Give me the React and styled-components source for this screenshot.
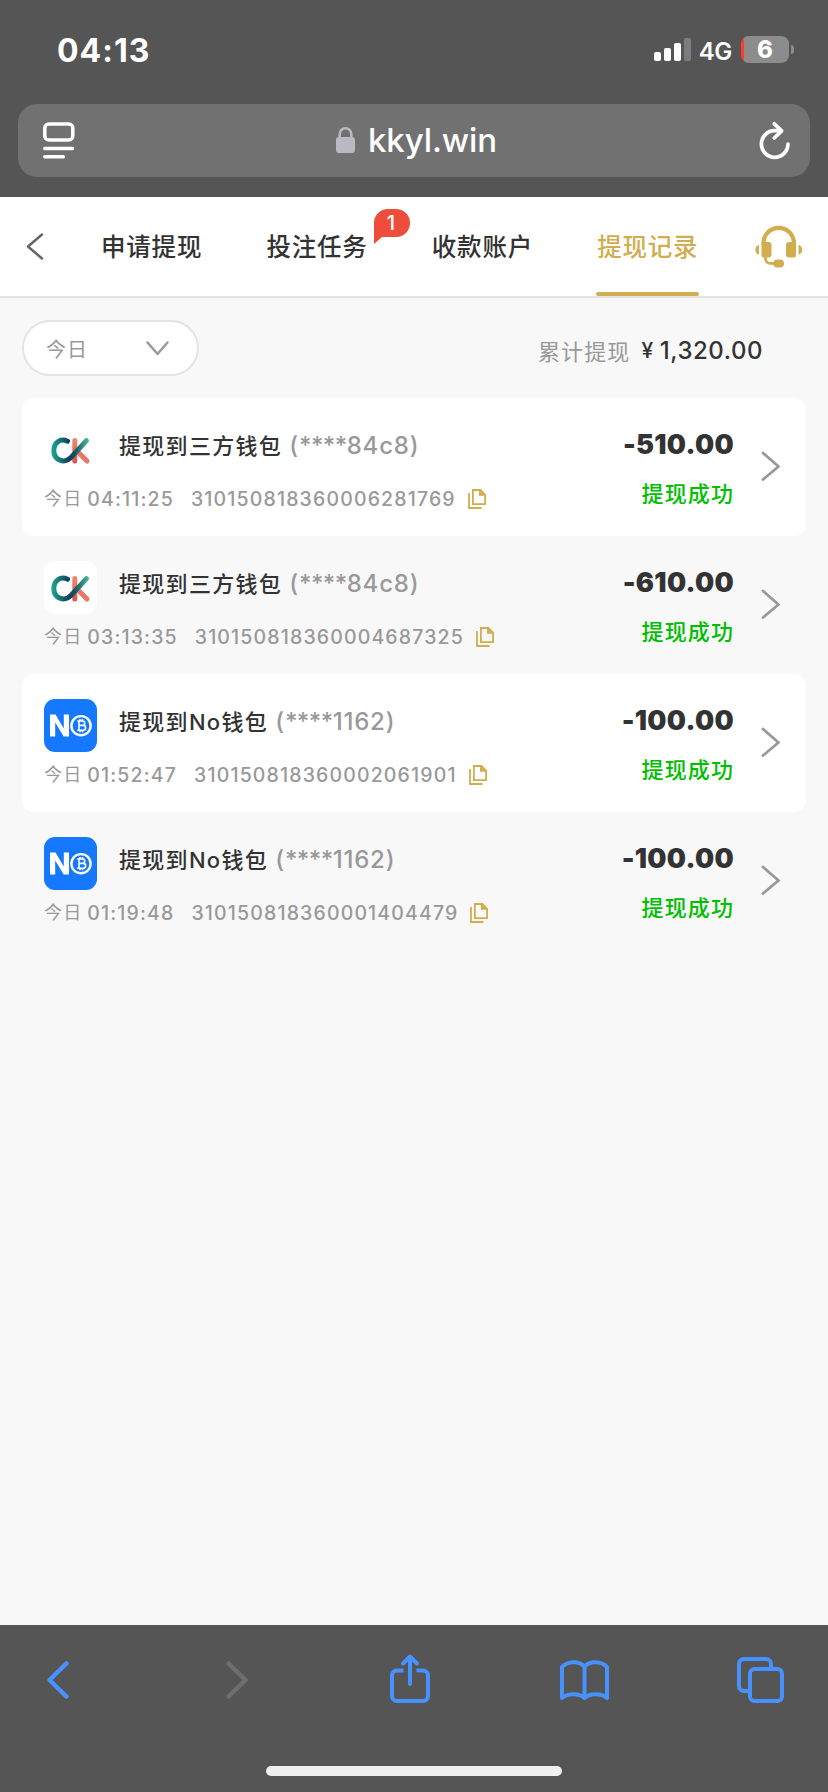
import React from "react";
import styled, { createGlobalStyle } from "styled-components";

const GlobalStyle = createGlobalStyle`
	* {
		box-sizing: border-box;
	}

	body {
		margin: 0;
		background: #f8f8f8;
		font-family: Inter, "Noto Sans CJK SC", sans-serif;
		color: #333;
	}
`;

const Screen = styled.div`
	display: flex;
	flex-direction: column;
	width: 828px;
	height: 1792px;
	background: #f8f8f8;
	white-space: nowrap;
`;

const Icon = styled.svg`
	display: block;
	flex: none;
	fill: none;
	overflow: visible;
`;

/* phone status bar + address bar */

const BrowserHeader = styled.header`
	flex: none;
	height: 197px;
	background: #555;
	color: #fff;
`;

const StatusBar = styled.div`
	display: flex;
	align-items: center;
	justify-content: space-between;
	height: 104px;
	padding: 0 34px 5px 57px;
`;

const Clock = styled.time`
	padding-top: 1px;
	font-size: 32px;
	font-weight: 700;
	letter-spacing: 1px;
`;

const StatusIcons = styled.div`
	display: flex;
	align-items: center;
`;

const Network = styled.span`
	margin: 4px 9px 0 8px;
	font-size: 24px;
	line-height: 28px;
	font-weight: 600;
	letter-spacing: -0.3px;
`;

const Battery = styled.div`
	width: 48px;
	height: 27px;
	border-radius: 8px;
	background: linear-gradient(90deg, #ff3b30 3px, #8c8c8c 3px);
	font-size: 24px;
	line-height: 28px;
	font-weight: 800;
	text-align: center;
`;

const BatteryTip = styled.i`
	width: 3px;
	height: 9px;
	margin-left: 2px;
	border-radius: 0 4px 4px 0;
	background: #8c8c8c;
`;

const AddressBar = styled.div`
	display: flex;
	align-items: center;
	justify-content: space-between;
	height: 73px;
	margin: 0 18px;
	padding: 0 20px 0 25px;
	border-radius: 19px;
	background: #717171;
`;

const Address = styled.div`
	display: flex;
	align-items: center;
	gap: 13px;
	margin-top: -2px;
	font-size: 33px;
	line-height: 40px;
	font-weight: 500;
	letter-spacing: -0.1px;
`;

/* page tabs */

const TabBar = styled.nav`
	display: flex;
	align-items: center;
	flex: none;
	height: 101px;
	padding-left: 26px;
	border-bottom: 2px solid #e2e2e2;
	background: #fff;
`;

const Tabs = styled.div`
	display: flex;
	gap: 63px;
	height: 99px;
	margin: 0 56px 0 56px;
`;

const Tab = styled.button`
	position: relative;
	width: 102.4px;
	padding: 2px 0 0 1px;
	border: 0;
	border-bottom: 4px solid transparent;
	background: none;
	color: ${(p) => (p.$active ? "#d1ad4f" : "#333")};
	font: 500 24.5px/93px "Noto Sans CJK SC", sans-serif;
	letter-spacing: 0.8px;
	text-align: left;

	&::after {
		content: "";
		position: absolute;
		left: 0;
		right: 0;
		bottom: -4px;
		height: 4px;
		border-radius: 2px;
		background: ${(p) => (p.$active ? "#d1ad4f" : "transparent")};
	}
`;

const Badge = styled.span`
	position: absolute;
	top: 12px;
	left: 108.4px;
	width: 36px;
	height: 35px;
	font: 500 20px/28px Inter, sans-serif;
	letter-spacing: 0;
	text-align: center;
	color: #fff;

	svg {
		position: absolute;
		inset: 0;
	}

	b {
		position: relative;
		left: -1px;
		font-weight: 500;
	}
`;

/* filter + total */

const Toolbar = styled.div`
	display: flex;
	justify-content: space-between;
	flex: none;
	height: 100px;
	padding: 22px 65px 0 22px;
`;

const DateFilter = styled.button`
	display: flex;
	align-items: center;
	justify-content: space-between;
	width: 177px;
	height: 56px;
	padding: 0 29px 0 22px;
	border: 2px solid #e3e3e3;
	border-radius: 28px;
	background: #fff;
	color: #999;
	font: 400 20px "Noto Sans CJK SC", sans-serif;
	letter-spacing: 1px;

	svg {
		margin-right: -1px;
	}
`;

const Total = styled.div`
	display: flex;
	align-items: center;
	height: 61px;
	font-size: 24px;
	font-weight: 500;
	letter-spacing: 0.55px;
`;

const TotalLabel = styled.span`
	margin: -2px 11px 0 0;
	color: #999;
	font-size: 22px;
	font-weight: 400;
	letter-spacing: 1.1px;
`;

const Currency = styled.span`
	margin-right: 6px;
	font-size: 21px;
`;

/* records */

const Records = styled.main`
	flex: 1;
	padding: 0 22px;
`;

const Record = styled.article`
	display: flex;
	height: 138px;
	padding: 25px 26px 0 22px;
	border-radius: 12px;
	background: ${(p) => (p.$filled ? "#fff" : "transparent")};
`;

const Details = styled.div`
	flex: 1;
`;

const Heading = styled.div`
	display: flex;
	gap: 22px;
	height: 53px;
`;

const Logo = styled.div`
	width: 53px;
	height: 53px;
	border-radius: 11px;
	background: ${(p) => p.$color};
	overflow: hidden;
`;

const Title = styled.h2`
	margin: 0;
	font-size: 22px;
	line-height: 46px;
	font-weight: 500;
	letter-spacing: 1.3px;
`;

const Mask = styled.span`
	color: #999;
	font-size: 24px;
	letter-spacing: 0.8px;
`;

const Stars = styled.span`
	letter-spacing: -0.55px;
`;

const Meta = styled.div`
	display: flex;
	align-items: center;
	height: 24px;
	margin-top: 11px;
	color: #999;
	font-size: 19.5px;
	line-height: 24px;
	font-weight: 500;
	letter-spacing: 1.15px;
`;

const Day = styled.span`
	margin-right: 5px;
	font-size: 18px;
	font-weight: 400;
`;

const Serial = styled.span`
	margin: 0 12px 0 17px;
`;

const Result = styled.div`
	display: flex;
	flex-direction: column;
	align-items: flex-end;
	margin-right: 27px;
	padding-top: 1px;
`;

const Amount = styled.strong`
	font-size: 27px;
	line-height: 42px;
	font-weight: 900;
	letter-spacing: 0.3px;
`;

const State = styled.span`
	margin-top: 13px;
	color: #00bf00;
	font-size: 22px;
	line-height: 30px;
	font-weight: 500;
	letter-spacing: 1.1px;
`;

const Arrow = styled(Icon)`
	margin-top: 28px;
`;

/* safari toolbar */

const BrowserFooter = styled.footer`
	flex: none;
	height: 167px;
	padding-top: 25px;
	background: #555;
`;

const FooterActions = styled.div`
	display: flex;
	align-items: center;
	justify-content: space-between;
	height: 60px;
	padding: 0 44px 0 34px;
`;

const FooterButton = styled.button`
	display: flex;
	justify-content: center;
	width: 48px;
	padding: 0 0 0 ${(p) => p.$shift || 0}px;
	border: 0;
	background: none;
`;

const HomeIndicator = styled.div`
	width: 296px;
	height: 10px;
	margin: 56px auto 0;
	border-radius: 5px;
	background: #efefef;
`;

const SignalIcon = () => (
	<Icon width="37" height="24">
		<g fill="#fff">
			<rect x="0" y="14" width="7" height="9" rx="2" />
			<rect x="10" y="10" width="7" height="13" rx="2" />
			<rect x="20" y="5" width="7" height="18" rx="2" />
			<rect x="30" y="0" width="7" height="23" rx="2" fill="#7d7d7d" />
		</g>
	</Icon>
);

const ReaderIcon = () => (
	<Icon width="32" height="37" stroke="#fff" strokeWidth="3.5" strokeLinecap="round">
		<rect x="1.8" y="2" width="28" height="16" rx="4" />
		<path d="M1.8 26.5h27.6M1.8 34.8h18.6" />
	</Icon>
);

const LockIcon = () => (
	<Icon width="19" height="27">
		<path d="M3.7 13V8a5.8 5.8 0 0 1 11.6 0v5" stroke="#b9b9c1" strokeWidth="2.6" />
		<rect y="11" width="19" height="16" rx="3" fill="#b9b9c1" />
	</Icon>
);

const ReloadIcon = () => (
	<Icon width="32" height="38" stroke="#fff" strokeWidth="3.7" strokeLinecap="round" strokeLinejoin="round">
		<path d="M30 22A13.3 13.3 0 1 1 16.7 8.7h6" />
		<path d="M16.3 1.8l7.400 7-7.400 7.200" />
	</Icon>
);

const HeadsetIcon = () => (
	<Icon width="48" height="42" viewBox="0 0 48 42">
		<path d="M8.500 19V17a15.200 15.200 0 0 1 30.400 0v2" stroke="#d1ad4f" strokeWidth="4.200" />
		<path d="M10.500 30v2.500a4.800 4.800 0 0 0 4.800 4.800H21" stroke="#d1ad4f" strokeWidth="2.800" />
		<g fill="#d1ad4f">
			<path d="M6.500 16h7a3 3 0 0 1 3 3v9.500a3 3 0 0 1-3 3H8.500a2 2 0 0 1-2-2z" />
			<path d="M41 16h-7a3 3 0 0 0-3 3v9.500a3 3 0 0 0 3 3h5a2 2 0 0 0 2-2z" />
			<path d="M4 19v9.500C1.500 28.100 0.300 26 0.300 23.700S1.500 19.400 4 19zM43.500 19v9.500c2.500-.4 3.700-2.500 3.700-4.800s-1.200-4.300-3.700-4.700z" />
			<rect x="18.300" y="33.500" width="10.700" height="8" rx="4" />
		</g>
	</Icon>
);

const CopyIcon = () => (
	<Icon width="18" height="20" stroke="#d1ad4f" strokeWidth="1.800">
		<path d="M4.900 1h7.600l4.600 4.800v9.400H4.900z" />
		<path d="M1 4v15h12.500" />
		<path d="M11 .8v5.900h6.500z" fill="#d1ad4f" stroke="none" />
	</Icon>
);

const CkLogo = () => (
	<Icon width="53" height="53" strokeLinecap="round" strokeWidth="5">
		<defs>
			<linearGradient id="ckBlue" gradientUnits="userSpaceOnUse" x1="8" y1="0" x2="45" y2="0">
				<stop offset="0" stopColor="#1ba793" />
				<stop offset="0.450" stopColor="#123f5b" />
				<stop offset="0.600" stopColor="#154e61" />
				<stop offset="1" stopColor="#46bd9e" />
			</linearGradient>
			<linearGradient id="ckRed" gradientUnits="userSpaceOnUse" x1="0" y1="15" x2="0" y2="41">
				<stop offset="0" stopColor="#ee8b72" />
				<stop offset="1" stopColor="#d9534b" />
			</linearGradient>
		</defs>
		<path d="M30.800 17.500v20.500" stroke="url(#ckRed)" />
		<path d="M35 30l8 8" stroke="#e77864" />
		<path d="M23.500 18.200C16 14.800 9.800 20 9.800 27.500c0 10 10.500 13.500 17.200 7L42.500 17.600" stroke="url(#ckBlue)" />
	</Icon>
);

const NoLogo = () => (
	<Icon width="53" height="53" stroke="#fff">
		<path d="M6 37.500V15.500h5.500l8.300 14V15.500H25v22h-5.300l-8.500-14v14z" fill="#fff" stroke="none" />
		<circle cx="37" cy="26.700" r="9.600" strokeWidth="2.400" />
		<path d="M35 22h3.500a2.200 2.200 0 0 1 0 4.400H35h4.200a2.400 2.400 0 0 1 0 4.800H35zM33.200 22h2M33.200 31.200h2M36 20v2M38.500 20v2M36 31.200v2M38.500 31.200v2" strokeWidth="1.600" />
	</Icon>
);

const logos = {
	ck: { color: "#fff", Mark: CkLogo },
	no: { color: "#1677ff", Mark: NoLogo },
};

const tabs = [
	{ name: "申请提现" },
	{ name: "投注任务", badge: 1 },
	{ name: "收款账户" },
	{ name: "提现记录", active: true },
];

const records = [
	{ logo: "ck", wallet: "三方钱包", tail: "84c8", time: "04:11:25", serial: "310150818360006281769", amount: "-510.00" },
	{ logo: "ck", wallet: "三方钱包", tail: "84c8", time: "03:13:35", serial: "310150818360004687325", amount: "-610.00" },
	{ logo: "no", wallet: "No钱包", tail: "1162", time: "01:52:47", serial: "310150818360002061901", amount: "-100.00" },
	{ logo: "no", wallet: "No钱包", tail: "1162", time: "01:19:48", serial: "310150818360001404479", amount: "-100.00" },
];

function RecordItem({ record, filled }) {
	const { color, Mark } = logos[record.logo];

	return (
		<Record $filled={filled}>
			<Details>
				<Heading>
					<Logo $color={color}>
						<Mark />
					</Logo>
					<Title>
						提现到{record.wallet}{" "}
						<Mask>
							(<Stars>****</Stars>
							{record.tail})
						</Mask>
					</Title>
				</Heading>
				<Meta>
					<Day>今日</Day>
					<span>{record.time}</span>
					<Serial>{record.serial}</Serial>
					<CopyIcon />
				</Meta>
			</Details>
			<Result>
				<Amount>{record.amount}</Amount>
				<State>提现成功</State>
			</Result>
			<Arrow width="19" height="30" stroke="#999" strokeWidth="2.800" strokeLinecap="round" strokeLinejoin="round">
				<path d="M2 2l15.500 13.500L2 28.500" />
			</Arrow>
		</Record>
	);
}

export default function App() {
	return (
		<Screen>
			<GlobalStyle />
			<BrowserHeader>
				<StatusBar>
					<Clock>04:13</Clock>
					<StatusIcons>
						<SignalIcon />
						<Network>4G</Network>
						<Battery>6</Battery>
						<BatteryTip />
					</StatusIcons>
				</StatusBar>
				<AddressBar>
					<ReaderIcon />
					<Address>
						<LockIcon />
						<span>kkyl.win</span>
					</Address>
					<ReloadIcon />
				</AddressBar>
			</BrowserHeader>

			<TabBar>
				<Icon width="18" height="27" stroke="#666" strokeWidth="2.500" strokeLinecap="round" strokeLinejoin="round">
					<path d="M16 1.500L2 13.500l14 12" />
				</Icon>
				<Tabs>
					{tabs.map((tab) => (
						<Tab key={tab.name} $active={tab.active}>
							{tab.name}
							{tab.badge && (
								<Badge>
									<Icon width="36" height="35">
										<path d="M14 0h8a14 14 0 0 1 0 28H8L0 35V14A14 14 0 0 1 14 0z" fill="#ed4e3c" />
									</Icon>
									<b>{tab.badge}</b>
								</Badge>
							)}
						</Tab>
					))}
				</Tabs>
				<HeadsetIcon />
			</TabBar>

			<Toolbar>
				<DateFilter>
					今日
					<Icon width="23" height="15" stroke="#999" strokeWidth="2.500" strokeLinecap="round" strokeLinejoin="round">
						<path d="M1.500 1.500l10 11.500 10-11.500" />
					</Icon>
				</DateFilter>
				<Total>
					<TotalLabel>累计提现</TotalLabel>
					<Currency>¥</Currency>
					1,320.00
				</Total>
			</Toolbar>

			<Records>
				{records.map((record, i) => (
					<RecordItem key={record.serial} record={record} filled={i % 2 === 0} />
				))}
			</Records>

			<BrowserFooter>
				<FooterActions>
					<FooterButton>
						<Icon width="24" height="38" stroke="#4792ff" strokeWidth="4.500" strokeLinecap="round" strokeLinejoin="round">
							<path d="M20.500 2.500L3.500 19l17 16.500" />
						</Icon>
					</FooterButton>
					<FooterButton $shift={7}>
						<Icon width="24" height="38" stroke="#6e6e6e" strokeWidth="4.500" strokeLinecap="round" strokeLinejoin="round">
							<path d="M3.500 2.500L20.500 19l-17 16.500" />
						</Icon>
					</FooterButton>
					<FooterButton $shift={2}>
						<Icon width="40" height="52" stroke="#4792ff" strokeWidth="4">
							<path d="M13.500 16.500H7a5 5 0 0 0-5 5V42a5 5 0 0 0 5 5h26a5 5 0 0 0 5-5V21.500a5 5 0 0 0-5-5h-6.500" />
							<path d="M20 30V2.500M13 9.500l7-7 7 7" strokeLinecap="round" strokeLinejoin="round" />
						</Icon>
					</FooterButton>
					<FooterButton>
						<Icon width="49" height="41" stroke="#4792ff" strokeWidth="4" strokeLinejoin="round">
							<path d="M24.500 6.500C19 .800 8 .800 2 7v31c6-5 17-5 22.500 0 5.500-5 16.500-5 22.500 0V7C41 .800 30 .800 24.500 6.500zv31" />
						</Icon>
					</FooterButton>
					<FooterButton>
						<Icon width="47" height="46" stroke="#4792ff" strokeWidth="4">
							<rect x="13" y="12" width="32" height="32" rx="4.500" />
							<path d="M11 34H7a5 5 0 0 1-5-5V7a5 5 0 0 1 5-5h22a5 5 0 0 1 5 5v4" />
						</Icon>
					</FooterButton>
				</FooterActions>
				<HomeIndicator />
			</BrowserFooter>
		</Screen>
	);
}
